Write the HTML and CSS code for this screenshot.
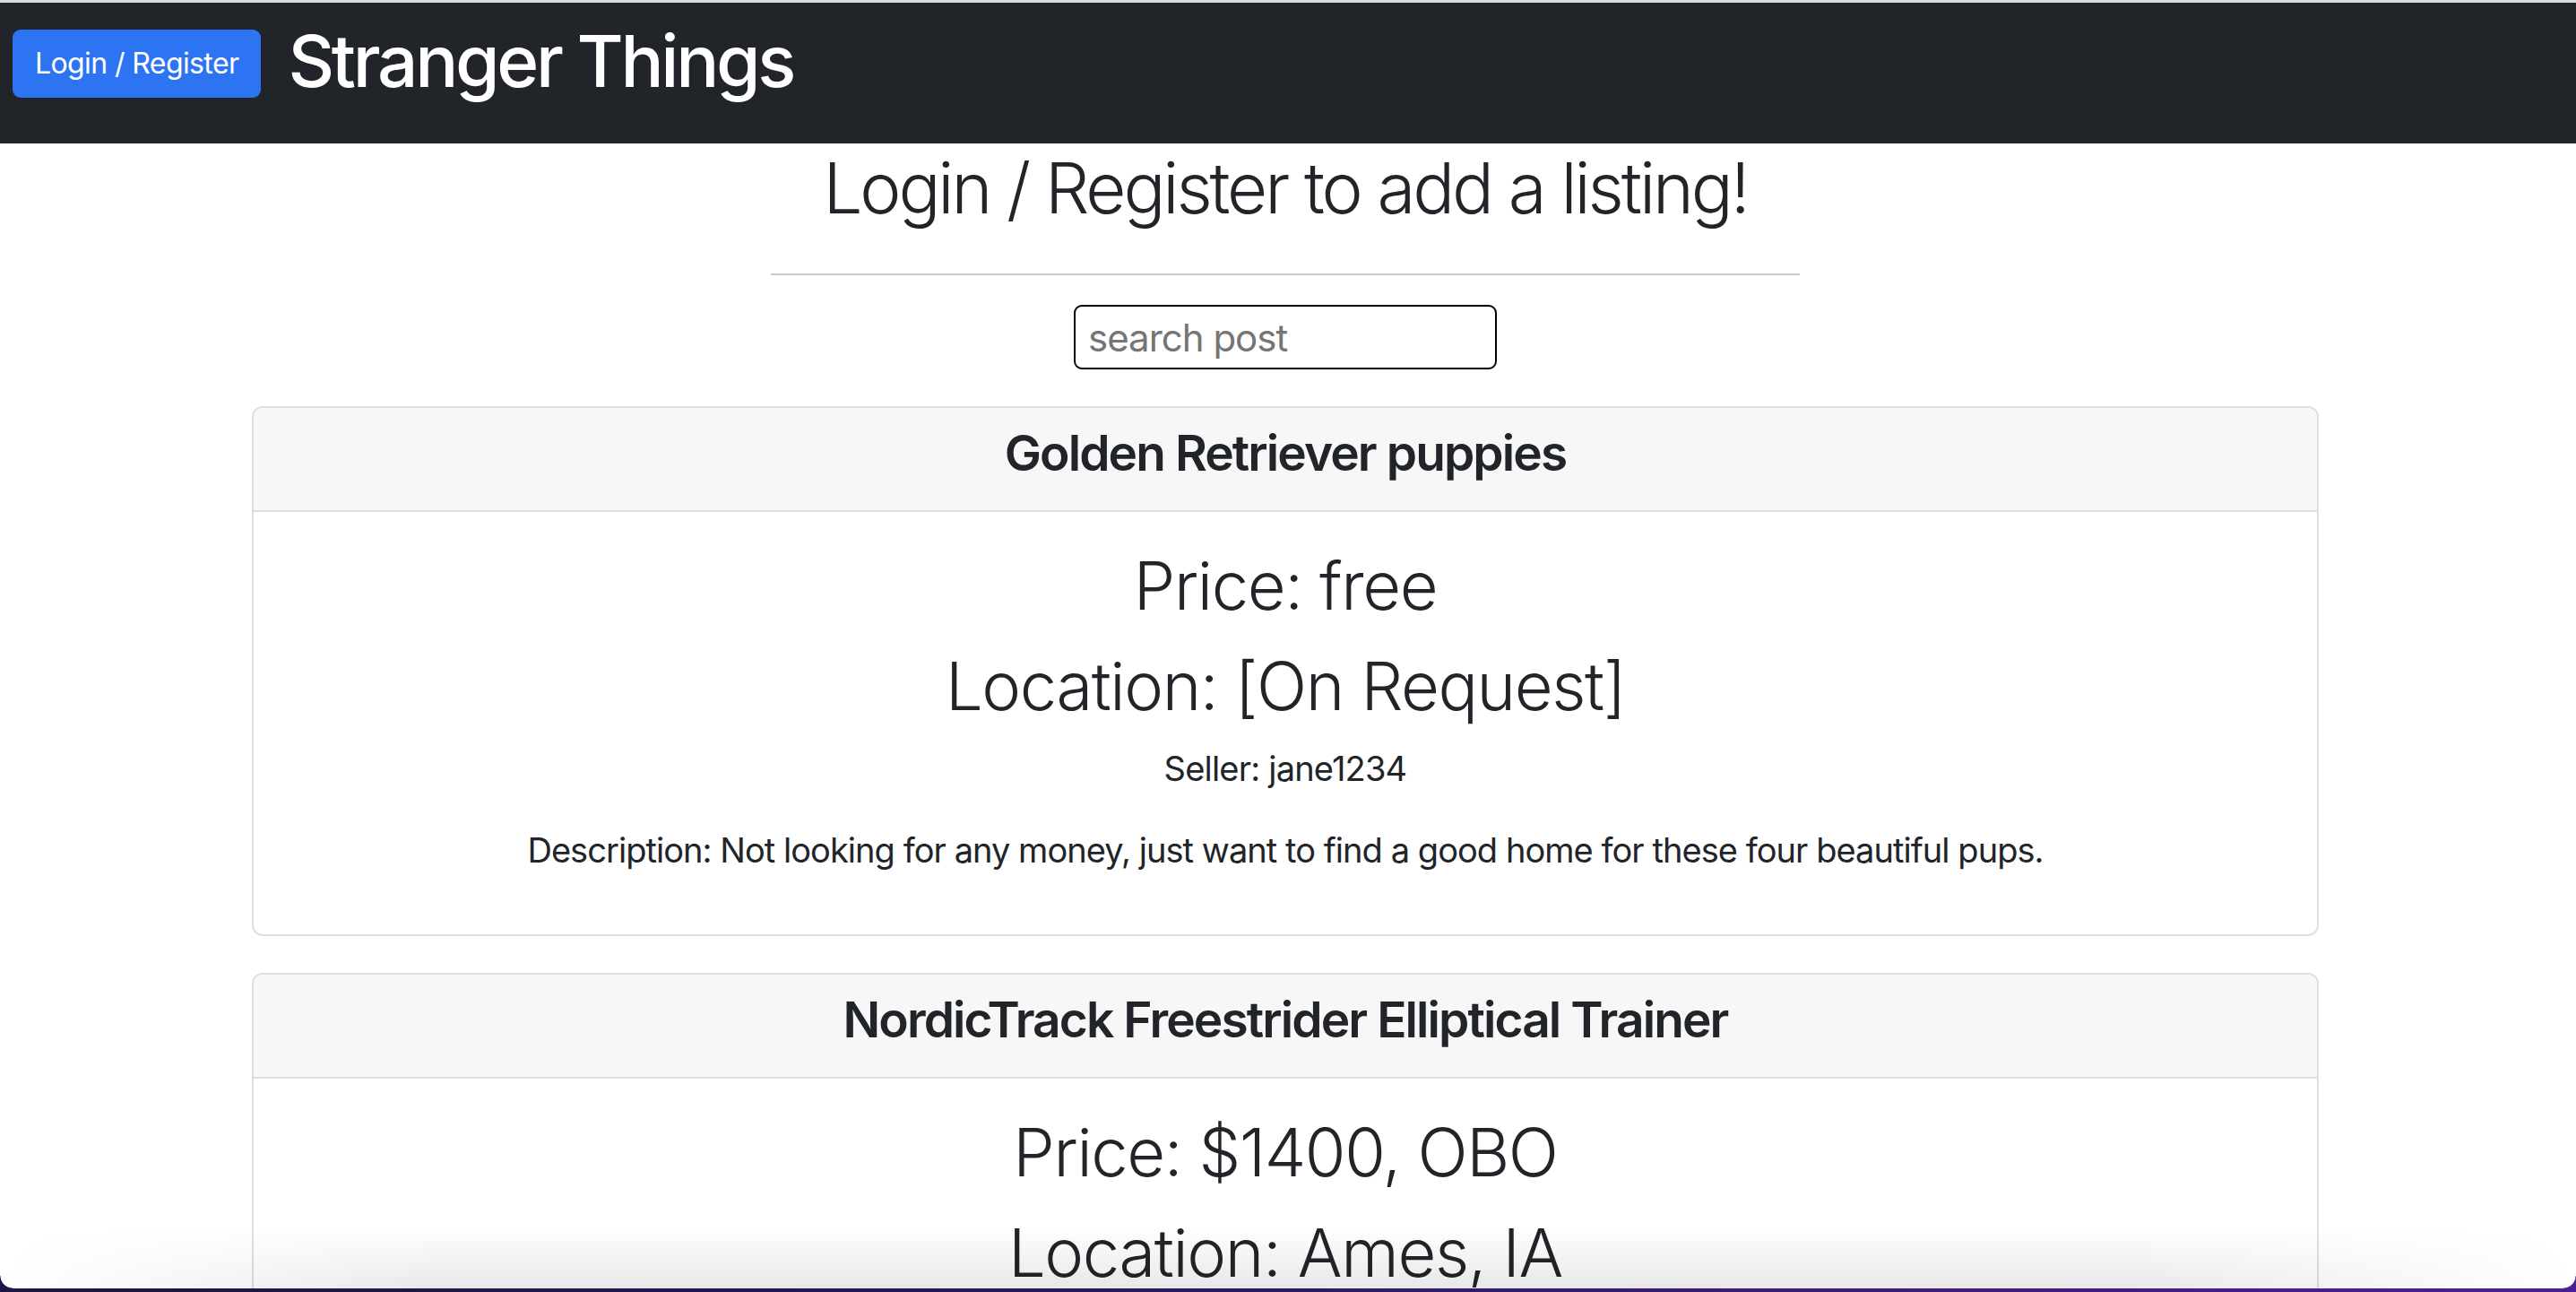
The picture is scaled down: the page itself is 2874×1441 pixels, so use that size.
FILE: index.html
```html
<!DOCTYPE html>
<html lang="en">
<head>
<meta charset="utf-8">
<title>Stranger Things</title>
<link rel="stylesheet" href="styles.css">
</head>
<body>
<nav class="navbar">
  <button class="btn-login" type="button">Login / Register</button>
  <h1 class="brand">Stranger Things</h1>
</nav>
<main class="page">
  <h1 class="headline">Login / Register to add a listing!</h1>
  <hr class="divider">
  <div class="search-wrap"><input class="search" type="text" placeholder="search post"></div>

  <div class="card">
    <div class="card-header"><h3 class="card-title">Golden Retriever puppies</h3></div>
    <div class="card-body">
      <h1 class="big">Price: free</h1>
      <h1 class="big">Location: [On Request]</h1>
      <p class="seller">Seller: jane1234</p>
      <p class="desc">Description: Not looking for any money, just want to find a good home for these four beautiful pups.</p>
    </div>
  </div>

  <div class="card">
    <div class="card-header"><h3 class="card-title">NordicTrack Freestrider Elliptical Trainer</h3></div>
    <div class="card-body">
      <h1 class="big">Price: $1400, OBO</h1>
      <h1 class="big">Location: Ames, IA</h1>
      <p class="seller">Seller: jane1234</p>
      <p class="desc">Description: Barely used elliptical trainer in great condition.</p>
    </div>
  </div>
</main>
<div class="window-shadow"></div>
<div class="corner corner-left"></div>
<div class="corner corner-right"></div>
<div class="desktop-strip"></div>
</body>
</html>
```

FILE: styles.css
```css
html {
  scrollbar-width: none;
}
html::-webkit-scrollbar {
  width: 0;
  height: 0;
}
body {
  margin: 0;
  background: #ffffff;
  color: #212529;
  font-family: "Inter", "Liberation Sans", sans-serif;
}

.navbar {
  box-sizing: border-box;
  height: 160px;
  border-top: 3px solid #dcdcdc;
  background: #212529;
  display: flex;
  align-items: flex-start;
  padding: 17px 14px 0 14px;
}

.btn-login {
  margin-top: 13px;
  height: 76px;
  padding: 0 25px;
  border: 0;
  border-radius: 9px;
  background: #2d74f2;
  color: #ffffff;
  font-family: "Inter", "Liberation Sans", sans-serif;
  font-size: 32px;
  line-height: 76px;
  letter-spacing: -0.6px;
  white-space: nowrap;
}

.brand {
  margin: 0 0 0 30px;
  color: #ffffff;
  font-size: 80px;
  font-weight: 500;
  line-height: 96px;
  letter-spacing: -3.3px;
  white-space: nowrap;
}

.page {
  margin-right: 6px;
  text-align: center;
}

.headline {
  margin: 3px 0 0;
  font-size: 78px;
  font-weight: 300;
  line-height: 94px;
  letter-spacing: -3.1px;
}

.divider {
  width: 40%;
  margin: 48px auto 0;
  border: 0;
  border-top: 2px solid #cacaca;
  height: 0;
}

.search-wrap {
  margin-top: 33px;
  display: flex;
  justify-content: center;
}

.search {
  box-sizing: border-box;
  width: 472px;
  height: 72px;
  border: 2px solid #000000;
  border-radius: 9px;
  padding: 0 14px;
  font-family: "Inter", "Liberation Sans", sans-serif;
  font-size: 42px;
  letter-spacing: -1px;
  color: #212529;
  outline: none;
}
.search::placeholder {
  color: #757575;
}

.card {
  width: 2302px;
  margin: 41px auto 0;
  border: 2px solid #dfdfdf;
  border-radius: 12px;
  overflow: hidden;
  text-align: center;
}

.card-header {
  background: #f7f7f7;
  border-bottom: 2px solid #dfdfdf;
  padding: 17px 32px 31px;
}

.card-title {
  margin: 0;
  font-size: 55px;
  font-weight: 600;
  line-height: 66px;
  letter-spacing: -1.9px;
}

.card-body {
  padding: 34px 32px 33px;
}

.big {
  margin: 0 0 16px;
  font-size: 74px;
  font-weight: 300;
  line-height: 96px;
  letter-spacing: -1.4px;
}

.seller {
  margin: 0 0 34px;
  font-size: 38px;
  line-height: 57px;
  letter-spacing: -0.8px;
}

.desc {
  margin: 0 0 32px;
  font-size: 38px;
  line-height: 57px;
  letter-spacing: -0.95px;
}

.window-shadow {
  position: fixed;
  left: 0;
  right: 0;
  bottom: 4px;
  height: 70px;
  pointer-events: none;
  background: linear-gradient(to bottom, rgba(0, 0, 0, 0), rgba(0, 0, 0, 0.09));
  -webkit-mask-image: linear-gradient(to right, transparent 0, #000 500px, #000 calc(100% - 500px), transparent 100%);
  mask-image: linear-gradient(to right, transparent 0, #000 500px, #000 calc(100% - 500px), transparent 100%);
}

.corner {
  position: fixed;
  bottom: 4px;
  width: 14px;
  height: 14px;
  pointer-events: none;
}
.corner-left {
  left: 0;
  background: radial-gradient(circle at 100% 0, transparent 13px, #1c1744 14px);
}
.corner-right {
  right: 0;
  background: radial-gradient(circle at 0 0, transparent 13px, #4b1f93 14px);
}

.desktop-strip {
  position: fixed;
  left: 0;
  right: 0;
  bottom: 0;
  height: 4px;
  background: linear-gradient(to right, #1b1642 0%, #231853 35%, #3a1c78 70%, #4b1f93 100%);
}
```
